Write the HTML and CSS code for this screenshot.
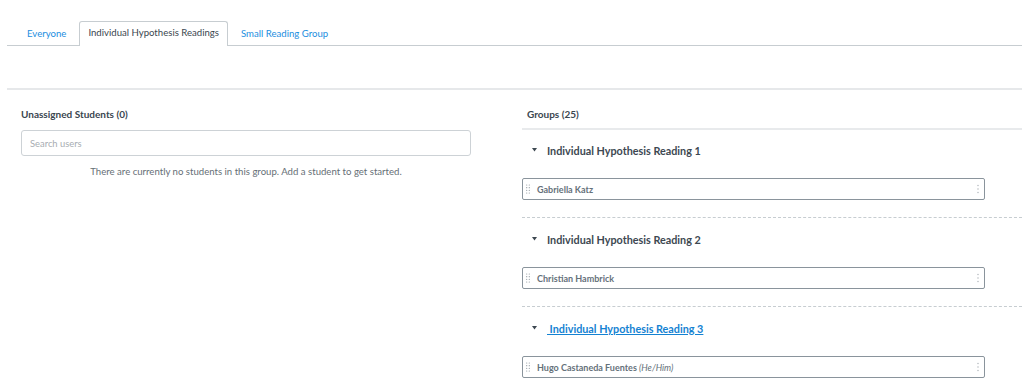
FILE: index.html
```html
<!DOCTYPE html>
<html lang="en">
<head>
  <meta charset="UTF-8" />
  <title>Groups</title>
  <link rel="stylesheet" href="styles.css">
</head>
<body>

  <div class="tabs">
    <a class="tab">Everyone</a>
    <a class="tab active">Individual Hypothesis Readings</a>
    <a class="tab">Small Reading Group</a>
  </div>

  <div class="toolbar"></div>

  <div class="content">
    <div class="unassigned">
      <h2>Unassigned Students (0)</h2>
      <input class="search" type="text" placeholder="Search users">
      <p class="empty">There are currently no students in this group. Add a student to get started.</p>
    </div>

    <div class="groups">
      <h2 class="groups-title">Groups (25)</h2>

      <div class="group">
        <div class="group-head">
          <svg class="caret" viewBox="0 0 6 4"><path d="M0 0h6L3 4z"/></svg>
          <span>Individual Hypothesis Reading 1</span>
        </div>
        <div class="student">
          <svg class="handle" viewBox="0 0 4 10"><circle cx="0.7" cy="1" r="0.6"/><circle cx="3.3" cy="1" r="0.6"/><circle cx="0.7" cy="3.7" r="0.6"/><circle cx="3.3" cy="3.7" r="0.6"/><circle cx="0.7" cy="6.3" r="0.6"/><circle cx="3.3" cy="6.3" r="0.6"/><circle cx="0.7" cy="9" r="0.6"/><circle cx="3.3" cy="9" r="0.6"/></svg>
          <span class="name">Gabriella Katz</span>
          <svg class="kebab" viewBox="0 0 2 10"><circle cx="1" cy="1.5" r="0.7"/><circle cx="1" cy="5" r="0.7"/><circle cx="1" cy="8.5" r="0.7"/></svg>
        </div>
      </div>

      <div class="group">
        <div class="group-head">
          <svg class="caret" viewBox="0 0 6 4"><path d="M0 0h6L3 4z"/></svg>
          <span>Individual Hypothesis Reading 2</span>
        </div>
        <div class="student">
          <svg class="handle" viewBox="0 0 4 10"><circle cx="0.7" cy="1" r="0.6"/><circle cx="3.3" cy="1" r="0.6"/><circle cx="0.7" cy="3.7" r="0.6"/><circle cx="3.3" cy="3.7" r="0.6"/><circle cx="0.7" cy="6.3" r="0.6"/><circle cx="3.3" cy="6.3" r="0.6"/><circle cx="0.7" cy="9" r="0.6"/><circle cx="3.3" cy="9" r="0.6"/></svg>
          <span class="name">Christian Hambrick</span>
          <svg class="kebab" viewBox="0 0 2 10"><circle cx="1" cy="1.5" r="0.7"/><circle cx="1" cy="5" r="0.7"/><circle cx="1" cy="8.5" r="0.7"/></svg>
        </div>
      </div>

      <div class="group">
        <div class="group-head link">
          <svg class="caret" viewBox="0 0 6 4"><path d="M0 0h6L3 4z"/></svg>
          <a>&nbsp;Individual Hypothesis Reading 3</a>
        </div>
        <div class="student">
          <svg class="handle" viewBox="0 0 4 10"><circle cx="0.7" cy="1" r="0.6"/><circle cx="3.3" cy="1" r="0.6"/><circle cx="0.7" cy="3.7" r="0.6"/><circle cx="3.3" cy="3.7" r="0.6"/><circle cx="0.7" cy="6.3" r="0.6"/><circle cx="3.3" cy="6.3" r="0.6"/><circle cx="0.7" cy="9" r="0.6"/><circle cx="3.3" cy="9" r="0.6"/></svg>
          <span class="name">Hugo Castaneda Fuentes <em>(He/Him)</em></span>
          <svg class="kebab" viewBox="0 0 2 10"><circle cx="1" cy="1.5" r="0.7"/><circle cx="1" cy="5" r="0.7"/><circle cx="1" cy="8.5" r="0.7"/></svg>
        </div>
      </div>
    </div>
  </div>

</body>
</html>
```

FILE: styles.css
```css
* {
  box-sizing: border-box;
  font-family: Lato, 'Open Sans', sans-serif;
}

body {
  margin: 0;
  background: #fff;
  color: #2d3b45;
  overflow: hidden;
}

.tabs {
  display: flex;
  align-items: flex-end;
  margin: 22px 0 0 7px;
  padding-left: 7px;
  height: 24px;
  border-bottom: 1px solid #c7cdd1;
}

.tab {
  display: block;
  height: 24px;
  line-height: 22px;
  padding: 0 12px;
  font-size: 9.6px;
  color: #1c8ee0;
  border: 1px solid transparent;
  border-bottom: none;
  margin-bottom: -1px;
}

.tab.active {
  color: #3a464f;
  background: #fff;
  border-color: #c7cdd1;
  border-radius: 3px 3px 0 0;
  padding: 0 8px;
  height: 25px;
}

.toolbar {
  height: 44px;
  margin-left: 7px;
  border-bottom: 2px solid #e6e8ea;
}

.content {
  display: flex;
}

.unassigned {
  width: 471px;
  padding-left: 21px;
}

h2 {
  margin: 0;
  font-size: 10px;
  font-weight: 700;
  height: 40px;
  line-height: 48px;
  color: #3a464f;
}

.search {
  display: block;
  width: 100%;
  height: 26px;
  border: 1px solid #cdd2d6;
  border-radius: 3px;
  padding: 0 8px;
  font-size: 9.4px;
  outline: none;
}

.search::placeholder {
  color: #a7adb2;
}

.empty {
  margin: 10px 0 0;
  text-align: center;
  font-size: 9.6px;
  color: #666f76;
}

.groups {
  flex: 1;
  margin-left: 51px;
}

.groups-title {
  padding-left: 5px;
  border-bottom: 2px solid #e8eaec;
}

.group {
  padding: 12px 37px 17px 0;
  border-bottom: 1px dashed #c7cdd1;
}

.group:first-of-type {
  padding-top: 11px;
}

.group-head {
  display: flex;
  align-items: center;
  height: 18px;
  padding-left: 10px;
  font-size: 10.8px;
  font-weight: 700;
  color: #3d4851;
  margin-bottom: 19px;
}

.caret {
  width: 5px;
  height: 3.5px;
  fill: #3d4851;
  margin-right: 10px;
}

.group-head.link a {
  color: #1482d2;
  text-decoration: underline;
}

.student {
  display: flex;
  align-items: center;
  height: 22px;
  border: 1px solid #8a949c;
  border-radius: 2px;
  padding: 0 5px 0 3px;
}

.handle {
  width: 4px;
  height: 10px;
  fill: #8f979e;
  margin-right: 7px;
}

.name {
  flex: 1;
  font-size: 9px;
  font-weight: 700;
  color: #65717a;
}

.name em {
  font-weight: 400;
}

.kebab {
  width: 2px;
  height: 10px;
  fill: #a9b0b5;
}
```
